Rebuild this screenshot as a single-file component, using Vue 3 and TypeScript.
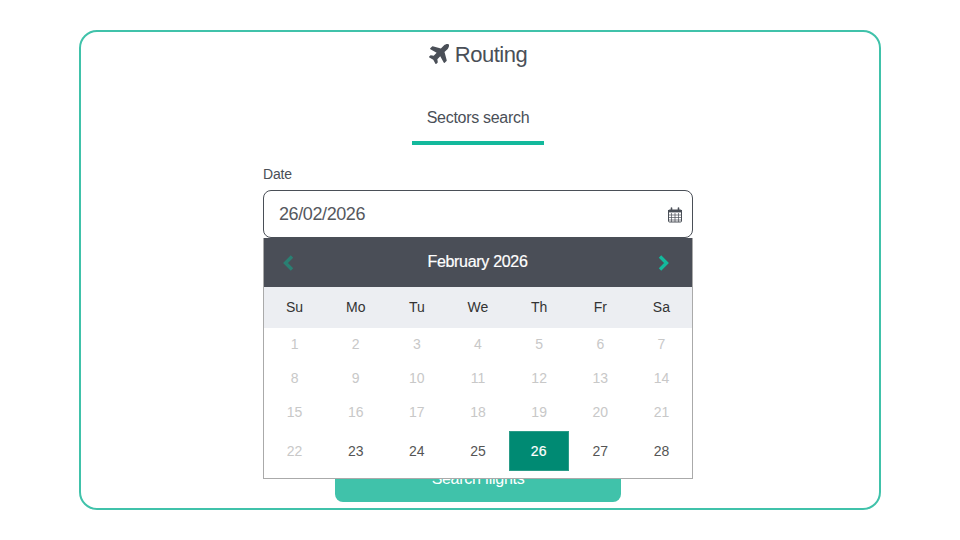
<template>
  <div class="page">
    <div class="card">
      <h1 class="title">
        <svg class="plane" viewBox="0 0 576 512" fill="currentColor">
          <path transform="rotate(-45 288 256)" d="M480 192H365.71L260.61 8.06A16.014 16.014 0 0 0 246.71 0h-65.5c-10.63 0-18.3 10.17-15.38 20.39L214.86 192H112l-43.2-57.6c-3.02-4.03-7.77-6.4-12.8-6.4H16.01C5.6 128-2.04 137.78.49 147.88L32 256 .49 364.12C-2.04 374.22 5.6 384 16.01 384H56c5.04 0 9.78-2.37 12.8-6.4L112 320h102.86l-49.03 171.6c-2.92 10.22 4.75 20.4 15.38 20.4h65.5c5.74 0 11.04-3.08 13.89-8.06L365.71 320H480c35.35 0 96-28.65 96-64s-60.65-64-96-64z"/>
        </svg>
        Routing
      </h1>

      <div class="tabs">
        <div class="tab">Sectors search</div>
      </div>

      <form class="form" @submit.prevent>
        <label class="label">Date</label>
        <div class="field">
          <div class="input">
            <span>26/02/2026</span>
            <svg class="cal" viewBox="0 0 16 16" fill="none" stroke="#4a4f57">
              <rect x="1.5" y="3" width="13" height="12" rx="1" stroke-width="1"/>
              <rect x="1" y="3" width="14" height="2.4" fill="#4a4f57" stroke="none"/>
              <path d="M1.5 8h13M1.5 10.5h13M1.5 13h13M4.5 6v9M8 6v9M11.5 6v9" stroke-width="0.7"/>
              <path d="M4.5 1v3M11.5 1v3" stroke-width="1.6" stroke-linecap="round"/>
            </svg>
          </div>

          <div class="picker">
            <div class="picker-head">
              <svg class="nav prev" viewBox="0 0 12 16" fill="none" stroke="currentColor" stroke-width="3.4">
                <path d="M10 1.5 3.5 8l6.5 6.5"/>
              </svg>
              <span class="month">February 2026</span>
              <svg class="nav next" viewBox="0 0 12 16" fill="none" stroke="currentColor" stroke-width="3.4">
                <path d="M2 1.5 8.500 8 2 14.500"/>
              </svg>
            </div>
            <div class="weekdays">
              <span v-for="d in weekdays" :key="d">{{ d }}</span>
            </div>
            <div class="days">
              <span
                v-for="d in days"
                :key="d"
                class="day"
                :class="{ off: d < 23, selected: d === 26, last: d >= 22 }"
              >{{ d }}</span>
            </div>
          </div>
        </div>

        <button class="submit" type="submit">Search flights</button>
      </form>
    </div>
  </div>
</template>

<script setup lang="ts">
const weekdays = ['Su', 'Mo', 'Tu', 'We', 'Th', 'Fr', 'Sa']
const days: number[] = Array.from({ length: 28 }, (_, i) => i + 1)
</script>

<style scoped>
.page {
  height: 540px;
  padding-top: 30px;
  box-sizing: border-box;
  font-family: "Liberation Sans", Arial, sans-serif;
  color: #4a4f57;
}

.card {
  width: 802px;
  height: 480px;
  margin: 0 auto;
  padding-right: 4px;
  box-sizing: border-box;
  border: 2px solid #40c2aa;
  border-radius: 18px;
  background: #fff;
  display: flex;
  flex-direction: column;
  align-items: center;
}

.title {
  margin: 8px 0 0;
  height: 30px;
  display: flex;
  align-items: center;
  gap: 3px;
  font-size: 22px;
  line-height: 30px;
  font-weight: 400;
  letter-spacing: -0.5px;
}

.plane {
  width: 23px;
  height: 23px;
  margin-top: -5px;
  overflow: visible;
}

.tabs {
  margin-top: 33px;
  display: flex;
  justify-content: center;
}

.tab {
  width: 132px;
  height: 42px;
  box-sizing: border-box;
  border-bottom: 4px solid #13b99c;
  text-align: center;
  font-size: 16px;
  line-height: 30px;
  letter-spacing: -0.3px;
}

.form {
  margin-top: 20px;
  width: 430px;
  display: flex;
  flex-direction: column;
  align-items: center;
}

.label {
  align-self: flex-start;
  height: 25px;
  font-size: 14px;
  line-height: 18px;
  letter-spacing: -0.2px;
}

.field {
  position: relative;
  width: 100%;
}

.input {
  height: 48px;
  box-sizing: border-box;
  border: 1px solid #4a4f57;
  border-radius: 8px;
  padding: 0 9px 0 15px;
  display: flex;
  align-items: center;
  justify-content: space-between;
  font-size: 18px;
  letter-spacing: -0.4px;
  color: #55585e;
}

.cal {
  width: 16px;
  height: 16px;
  margin-top: 2px;
}

.picker {
  position: absolute;
  top: 48px;
  left: 0;
  right: 0;
  height: 241px;
  box-sizing: border-box;
  border: 1px solid #aaa;
  border-top: none;
  background: #fff;
  z-index: 2;
}

.picker-head {
  height: 49px;
  background: #4a4e57;
  display: flex;
  align-items: center;
  justify-content: space-between;
  padding: 0 22px 0 18px;
}

.month {
  color: #fff;
  font-size: 16px;
  letter-spacing: -0.3px;
  margin-top: -2px;
  margin-left: 3px;
  -webkit-text-stroke: 0.2px #fff;
}

.nav {
  width: 12px;
  height: 16px;
}

.prev {
  color: #2a7f72;
}

.next {
  color: #13b99c;
}

.weekdays {
  height: 41px;
  padding-bottom: 2px;
  box-sizing: border-box;
  background: #eceef2;
  display: grid;
  grid-template-columns: repeat(7, 1fr);
  align-items: center;
  justify-items: center;
  font-size: 14px;
  color: #333;
}

.days {
  margin-top: -1px;
  display: grid;
  grid-template-columns: repeat(7, 1fr);
  grid-auto-rows: 34px;
}

.day {
  display: flex;
  align-items: center;
  justify-content: center;
  font-size: 14px;
  color: #555;
}

.day.off {
  color: #c8c8c8;
}

.day.last {
  height: 40px;
  margin-top: 2px;
}

.day.selected {
  background: #008a73;
  color: #fff;
  -webkit-text-stroke: 0.2px #fff;
  margin-right: 1px;
  border: 1px solid #2a9c88;
  box-sizing: border-box;
}

.submit {
  width: 286px;
  height: 48px;
  margin-top: 216px;
  padding-top: 2px;
  border: none;
  border-radius: 0 0 8px 8px;
  background: #40c2aa;
  color: #fff;
  font-family: inherit;
  font-size: 16px;
  letter-spacing: -0.3px;
}
</style>
